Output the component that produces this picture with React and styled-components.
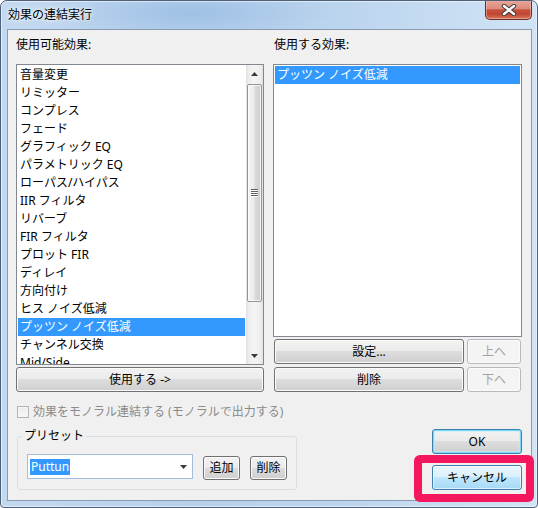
import React from "react";
import styled, { createGlobalStyle, css } from "styled-components";

const FONT = `"Noto Sans", "Noto Sans CJK JP", sans-serif`;

const GlobalStyle = createGlobalStyle`
  html, body { margin: 0; padding: 0; background: #ffffff; }
  body { font-family: ${FONT}; font-size: 12px; color: #000; }
  * { box-sizing: border-box; }
`;

const Window = styled.div`
  position: relative;
  width: 538px;
  height: 508px;
  border: 1px solid #4d6078;
  border-radius: 7px 7px 4px 4px;
  padding: 0 5px 6px 6px;
  display: flex;
  flex-direction: column;
  background:
    radial-gradient(ellipse 150px 26px at 190px 12px, rgba(140, 180, 224, 0.55), rgba(140, 180, 224, 0) 100%),
    linear-gradient(to right, #c3d9f0 0%, #b6d0ec 35%, #bcd5ee 65%, #d1e4f6 100%);
  box-shadow: inset 0 0 0 1px rgba(255, 255, 255, 0.55);
  overflow: hidden;
`;

const TitleBar = styled.div`
  height: 28px;
  display: flex;
  justify-content: space-between;
  align-items: flex-start;
  flex: none;
`;

const Title = styled.div`
  padding: 6px 0 0 1px;
  line-height: 16px;
  font-size: 12px;
  color: #000;
  text-shadow: 0 0 6px rgba(255, 255, 255, 0.95), 0 0 3px rgba(255, 255, 255, 0.9);
`;

const CloseButton = styled.div`
  margin-top: -1px;
  width: 47px;
  height: 20px;
  border: 1px solid #6e2d25;
  border-top: none;
  border-radius: 0 0 5px 5px;
  background: linear-gradient(#e8aa9d 0%, #dc8b7c 45%, #c7503d 52%, #c24633 75%, #d67a62 100%);
  box-shadow: inset 0 0 0 1px rgba(255, 210, 200, 0.45);
  display: flex;
  align-items: center;
  justify-content: center;
`;

const Client = styled.div`
  flex: 1;
  background: #f0f0f0;
  border: 1px solid #8a9bb1;
  padding: 8px 8px 0 8px;
  display: flex;
  flex-direction: column;
`;

const Columns = styled.div`
  display: grid;
  grid-template-columns: 248px 249px;
  column-gap: 9px;
`;

const Column = styled.div`
  display: flex;
  flex-direction: column;
`;

const SectionLabel = styled.div`
  height: 26px;
  line-height: 14px;
  padding-left: ${(p) => p.$indent || 0}px;
`;

const ListBox = styled.div`
  height: ${(p) => p.$h}px;
  border: 1px solid #828790;
  background: #fff;
  display: flex;
  flex: none;
`;

const ItemArea = styled.div`
  flex: 1;
  min-width: 0;
  padding: 1px;
  overflow: hidden;
`;

const Item = styled.div`
  height: 18px;
  line-height: 18px;
  padding-left: 2px;
  white-space: nowrap;
  background: ${(p) => (p.$selected ? "#3399ff" : "transparent")};
  color: ${(p) => (p.$selected ? "#ffffff" : "#000000")};
`;

const ScrollBar = styled.div`
  width: 17px;
  flex: none;
  display: flex;
  flex-direction: column;
  background: linear-gradient(to right, #dedede 0px, #ececec 2px, #f5f5f5 8px, #ececec 15px, #dedede 17px);
`;

const ScrollArrow = styled.div`
  height: 17px;
  flex: none;
  display: flex;
  align-items: center;
  justify-content: center;
`;

const Track = styled.div`
  flex: 1;
`;

const Thumb = styled.div`
  margin: 2px 1px 0 1px;
  height: 218px;
  flex: none;
  border: 1px solid #959595;
  border-radius: 2px;
  background: linear-gradient(to right, #f4f4f4 0%, #ebebeb 45%, #dadada 55%, #cdcdcd 100%);
  box-shadow: inset 0 0 0 1px rgba(255, 255, 255, 0.75);
  display: flex;
  align-items: center;
  justify-content: center;
`;

const buttonVariants = {
  normal: css`
    border-color: #707070;
    color: #000;
    background: linear-gradient(#f2f2f2 0%, #ebebeb 49%, #dddddd 50%, #cfcfcf 100%);
    box-shadow: inset 0 0 0 1px #fbfbfb;
  `,
  disabled: css`
    border-color: #b6babd;
    color: #a3a3a3;
    background: #f4f4f4;
    box-shadow: inset 0 0 0 1px #fbfbfb;
  `,
  default: css`
    border-color: #3c7fb1;
    color: #000;
    background: linear-gradient(#f2f2f2 0%, #ebebeb 49%, #dddddd 50%, #cfcfcf 100%);
    box-shadow: inset 0 0 0 1px #7ed9f7, inset 0 0 0 2px rgba(190, 238, 252, 0.6);
  `,
  hover: css`
    border-color: #3c7fb1;
    color: #000;
    background: linear-gradient(#eaf6fd 0%, #d9f0fc 49%, #bee6fd 50%, #a7d9f5 100%);
    box-shadow: inset 0 0 0 1px rgba(255, 255, 255, 0.6);
  `,
};

const Button = styled.button`
  height: ${(p) => p.$h || 25}px;
  width: ${(p) => (p.$w ? `${p.$w}px` : "auto")};
  margin-top: ${(p) => p.$mt || 0}px;
  padding: 0;
  font-family: ${FONT};
  font-size: 12px;
  line-height: 14px;
  border: 1px solid;
  border-radius: 3px;
  flex: none;
  ${(p) => buttonVariants[p.$variant || "normal"]}
`;

const ButtonGrid = styled.div`
  margin-top: 2px;
  padding-left: 1px;
  display: grid;
  grid-template-columns: 190px 54px;
  column-gap: 3px;
  row-gap: 3px;
`;

const CheckRow = styled.div`
  margin-top: 14px;
  height: 12px;
  display: flex;
  align-items: center;
  gap: 4px;
  padding-left: 1px;
  color: #8b8b8b;
  line-height: 14px;
  white-space: nowrap;
`;

const CheckBox = styled.span`
  width: 12px;
  height: 12px;
  flex: none;
  border: 1px solid #b4b4b4;
  background: linear-gradient(#ececec, #f8f8f8);
  box-shadow: inset 0 0 0 1px #f6f6f6;
`;

const BottomRow = styled.div`
  margin-top: 11px;
  padding: 0 1px 0 1px;
  display: flex;
  justify-content: space-between;
  align-items: flex-start;
`;

const GroupBox = styled.fieldset`
  margin: 0;
  width: 280px;
  height: 61px;
  border: 1px solid #d5dfe5;
  border-radius: 3px;
  padding: 11px 9px 9px 9px;
  min-width: 0;
`;

const GroupLegend = styled.legend`
  padding: 0 2px;
  margin-left: -5px;
  line-height: 14px;
  font-size: 12px;
`;

const PresetRow = styled.div`
  display: flex;
  align-items: flex-start;
  gap: 10px;
`;

const Combo = styled.div`
  width: 166px;
  height: 25px;
  flex: none;
  border: 1px solid #a3bfdc;
  background: #fff;
  display: flex;
  align-items: center;
  padding-left: 2px;
`;

const ComboText = styled.span`
  height: 16px;
  line-height: 16px;
  padding: 0 1px;
  background: #3399ff;
  color: #fff;
`;

const ComboArrow = styled.span`
  margin-left: auto;
  width: 17px;
  height: 100%;
  display: flex;
  align-items: center;
  justify-content: center;
`;

const DialogButtons = styled.div`
  display: flex;
  flex-direction: column;
  gap: 11px;
`;

const Highlight = styled.div`
  position: absolute;
  left: 413px;
  top: 454px;
  width: 120px;
  height: 47px;
  border: 8px solid #f4175d;
  border-radius: 6px;
  pointer-events: none;
`;

const UpArrow = () => (
  <svg width="7" height="4" viewBox="0 0 7 4">
    <path d="M0 4 L3.5 0 L7 4 Z" fill="#3a3a3a" />
  </svg>
);

const DownArrow = () => (
  <svg width="7" height="4" viewBox="0 0 7 4">
    <path d="M0 0 L7 0 L3.5 4 Z" fill="#3a3a3a" />
  </svg>
);

const Gripper = () => (
  <svg width="7" height="8" viewBox="0 0 7 8">
    {[0, 2, 4, 6].map((y) => (
      <g key={y}>
        <rect x="0" y={y} width="7" height="1" fill="#5f5f5f" />
        <rect x="0" y={y + 1} width="7" height="1" fill="#ffffff" />
      </g>
    ))}
  </svg>
);

const CloseGlyph = () => (
  <svg width="16" height="12" viewBox="0 0 16 12">
    <path d="M3 2 L13 10 M13 2 L3 10" stroke="#3b3b3b" strokeWidth="4.4" strokeLinecap="round" />
    <path d="M3 2 L13 10 M13 2 L3 10" stroke="#ffffff" strokeWidth="2.4" strokeLinecap="round" />
  </svg>
);

const available = [
  "音量変更",
  "リミッター",
  "コンプレス",
  "フェード",
  "グラフィック EQ",
  "パラメトリック EQ",
  "ローパス/ハイパス",
  "IIR フィルタ",
  "リバーブ",
  "FIR フィルタ",
  "プロット FIR",
  "ディレイ",
  "方向付け",
  "ヒス ノイズ低減",
  "プッツン ノイズ低減",
  "チャンネル交換",
  "Mid/Side",
];

export default function App() {
  return (
    <>
      <GlobalStyle />
      <Window>
        <TitleBar>
          <Title>効果の連結実行</Title>
          <CloseButton>
            <CloseGlyph />
          </CloseButton>
        </TitleBar>
        <Client>
          <Columns>
            <Column>
              <SectionLabel>使用可能効果:</SectionLabel>
              <ListBox $h={301}>
                <ItemArea>
                  {available.map((name) => (
                    <Item key={name} $selected={name === "プッツン ノイズ低減"}>
                      {name}
                    </Item>
                  ))}
                </ItemArea>
                <ScrollBar>
                  <ScrollArrow>
                    <UpArrow />
                  </ScrollArrow>
                  <Thumb>
                    <Gripper />
                  </Thumb>
                  <Track />
                  <ScrollArrow>
                    <DownArrow />
                  </ScrollArrow>
                </ScrollBar>
              </ListBox>
              <Button $mt={2}>使用する -&gt;</Button>
            </Column>
            <Column>
              <SectionLabel $indent={1}>使用する効果:</SectionLabel>
              <ListBox $h={273}>
                <ItemArea>
                  <Item $selected>プッツン ノイズ低減</Item>
                </ItemArea>
              </ListBox>
              <ButtonGrid>
                <Button>設定...</Button>
                <Button $variant="disabled">上へ</Button>
                <Button>削除</Button>
                <Button $variant="disabled">下へ</Button>
              </ButtonGrid>
            </Column>
          </Columns>
          <CheckRow>
            <CheckBox />
            効果をモノラル連結する (モノラルで出力する)
          </CheckRow>
          <BottomRow>
            <GroupBox>
              <GroupLegend>プリセット</GroupLegend>
              <PresetRow>
                <Combo>
                  <ComboText>Puttun</ComboText>
                  <ComboArrow>
                    <DownArrow />
                  </ComboArrow>
                </Combo>
                <Button $w={37} $h={24} $mt={2}>追加</Button>
                <Button $w={37} $h={24} $mt={2}>削除</Button>
              </PresetRow>
            </GroupBox>
            <DialogButtons>
              <Button $w={90} $variant="default">OK</Button>
              <Button $w={90} $variant="hover">キャンセル</Button>
            </DialogButtons>
          </BottomRow>
        </Client>
        <Highlight />
      </Window>
    </>
  );
}
